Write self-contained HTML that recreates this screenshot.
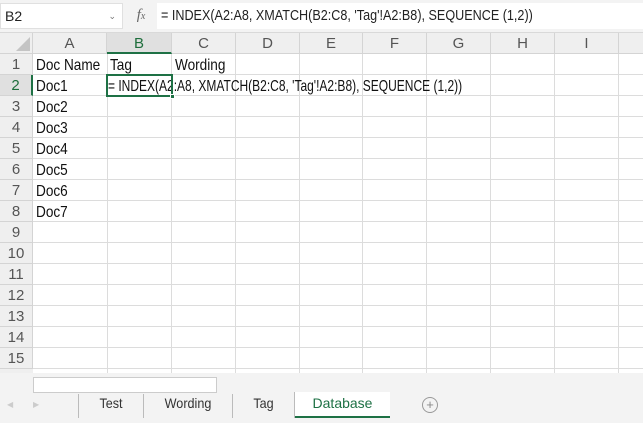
<!DOCTYPE html>
<html><head><style>
*{margin:0;padding:0;box-sizing:border-box}
body{width:643px;height:423px;overflow:hidden;background:#fff;font-family:"Liberation Sans",sans-serif;position:relative}
.a{position:absolute}
.top{left:0;top:0;width:643px;height:33px;background:#f3f3f3;border-bottom:1px solid #d9d9d9}
.nb{left:0;top:3px;width:123px;height:26px;background:#fff;border:1px solid #e0e0e0;font-size:14px;line-height:24px;padding-left:4px;color:#222}
.fx{left:128px;top:3px;width:26px;height:26px;font:italic 15px "Liberation Serif",serif;color:#666;line-height:24px;text-align:center}
.fi{left:157px;top:3px;width:486px;height:26px;background:#fff;font-size:15px;line-height:26px;padding-left:4px;color:#222;white-space:nowrap}
.hdr{top:33px;height:21px;background:#efefef;border-right:1px solid #d4d4d4;border-bottom:1px solid #d4d4d4;text-align:center;font-size:15px;color:#555;line-height:22px}
.rh{left:0;width:33px;height:21px;background:#efefef;border-bottom:1px solid #d4d4d4;border-right:1px solid #d4d4d4;text-align:center;font-size:15px;color:#555;line-height:22px}
.vl{top:54px;width:1px;height:319px;background:#dcdcdc}
.hl{left:33px;width:610px;height:1px;background:#dcdcdc}
.t{font-size:16px;color:#111;line-height:23px;white-space:nowrap;transform:scaleX(.85);transform-origin:left}
.tab{top:395px;text-align:center;font-size:14px;color:#333;transform:scaleX(.9)}
.dv{top:394px;width:1px;height:24px;background:#bbb}
</style></head><body>
<div class="a top"></div>
<div class="a nb">B2<span style="position:absolute;right:6px;top:0;font-size:9px;color:#777">&#8964;</span></div>
<div class="a fx"><i>f</i><span style="font-size:10px">x</span></div>
<div class="a fi"><span style="display:inline-block;transform:scaleX(.84);transform-origin:left">= INDEX(A2:A8, XMATCH(B2:C8, 'Tag'!A2:B8), SEQUENCE (1,2))</span></div>
<div class="a hdr" style="left:0;width:33px"><svg width="33" height="21"><polygon points="30,4 30,18 16,18" fill="#c4c4c4"/></svg></div>
<div class="a hdr" style="left:33px;width:74px">A</div>
<div class="a hdr" style="left:107px;width:65px;background:#e0e0e0;color:#1e6e3c;border-bottom:2px solid #1e7145">B</div>
<div class="a hdr" style="left:172px;width:64px">C</div>
<div class="a hdr" style="left:236px;width:64px">D</div>
<div class="a hdr" style="left:300px;width:63px">E</div>
<div class="a hdr" style="left:363px;width:64px">F</div>
<div class="a hdr" style="left:427px;width:64px">G</div>
<div class="a hdr" style="left:491px;width:64px">H</div>
<div class="a hdr" style="left:555px;width:64px">I</div>
<div class="a hdr" style="left:619px;width:30px"></div>
<div class="a vl" style="left:107px"></div><div class="a vl" style="left:171px"></div><div class="a vl" style="left:235px"></div><div class="a vl" style="left:299px"></div><div class="a vl" style="left:362px"></div><div class="a vl" style="left:426px"></div><div class="a vl" style="left:490px"></div><div class="a vl" style="left:554px"></div><div class="a vl" style="left:618px"></div>
<div class="a hl" style="top:74px"></div><div class="a hl" style="top:95px"></div><div class="a hl" style="top:116px"></div><div class="a hl" style="top:137px"></div><div class="a hl" style="top:158px"></div><div class="a hl" style="top:179px"></div><div class="a hl" style="top:200px"></div><div class="a hl" style="top:221px"></div><div class="a hl" style="top:242px"></div><div class="a hl" style="top:263px"></div><div class="a hl" style="top:284px"></div><div class="a hl" style="top:305px"></div><div class="a hl" style="top:326px"></div><div class="a hl" style="top:347px"></div><div class="a hl" style="top:368px"></div>
<div class="a rh" style="top:54px">1</div>
<div class="a rh" style="top:75px;background:#e0e0e0;color:#1e6e3c;border-right:2px solid #1e7145">2</div>
<div class="a rh" style="top:96px">3</div><div class="a rh" style="top:117px">4</div><div class="a rh" style="top:138px">5</div><div class="a rh" style="top:159px">6</div><div class="a rh" style="top:180px">7</div><div class="a rh" style="top:201px">8</div><div class="a rh" style="top:222px">9</div><div class="a rh" style="top:243px">10</div><div class="a rh" style="top:264px">11</div><div class="a rh" style="top:285px">12</div><div class="a rh" style="top:306px">13</div><div class="a rh" style="top:327px">14</div><div class="a rh" style="top:348px">15</div>
<div class="a rh" style="top:369px;height:4px;border:none"></div>
<div class="a t" style="left:36px;top:54px">Doc Name</div>
<div class="a t" style="left:110px;top:54px">Tag</div>
<div class="a t" style="left:175px;top:54px">Wording</div>
<div class="a t" style="left:36px;top:75px">Doc1</div>
<div class="a t" style="left:36px;top:96px">Doc2</div>
<div class="a t" style="left:36px;top:117px">Doc3</div>
<div class="a t" style="left:36px;top:138px">Doc4</div>
<div class="a t" style="left:36px;top:159px">Doc5</div>
<div class="a t" style="left:36px;top:180px">Doc6</div>
<div class="a t" style="left:36px;top:201px">Doc7</div>
<div class="a t" style="left:108px;top:75px;transform:scaleX(.75)">= INDEX(A2:A8, XMATCH(B2:C8, 'Tag'!A2:B8), SEQUENCE (1,2))</div>
<div class="a" style="left:106px;top:74px;width:67px;height:23px;border:2px solid #1e7145"></div>
<div class="a" style="left:170px;top:94px;width:5px;height:5px;background:#1e7145;border:1px solid #fff"></div>
<div class="a" style="left:0;top:373px;width:643px;height:50px;background:#f3f3f3"></div>
<div class="a" style="left:33px;top:377px;width:184px;height:16px;background:#fff;border:1px solid #ccc"></div>
<div class="a" style="left:7px;top:400px;font-size:8px;color:#ccc">&#9664;</div>
<div class="a" style="left:33px;top:400px;font-size:8px;color:#ccc">&#9654;</div>
<div class="a dv" style="left:78px"></div>
<div class="a dv" style="left:143px"></div>
<div class="a dv" style="left:232px"></div>
<div class="a tab" style="left:79px;width:64px">Test</div>
<div class="a tab" style="left:144px;width:88px">Wording</div>
<div class="a tab" style="left:233px;width:61px">Tag</div>
<div class="a" style="left:294px;top:392px;width:1px;height:26px;background:#bbb"></div>
<div class="a" style="left:295px;top:392px;width:95px;height:26px;background:#fff;border-bottom:2px solid #1e7145;text-align:center;font-size:14px;color:#1e7145;line-height:22px">Database</div>
<div class="a" style="left:422px;top:397px;width:16px;height:16px;border:1px solid #999;border-radius:50%;text-align:center;font-size:13px;line-height:14px;color:#888">+</div>
</body></html>
